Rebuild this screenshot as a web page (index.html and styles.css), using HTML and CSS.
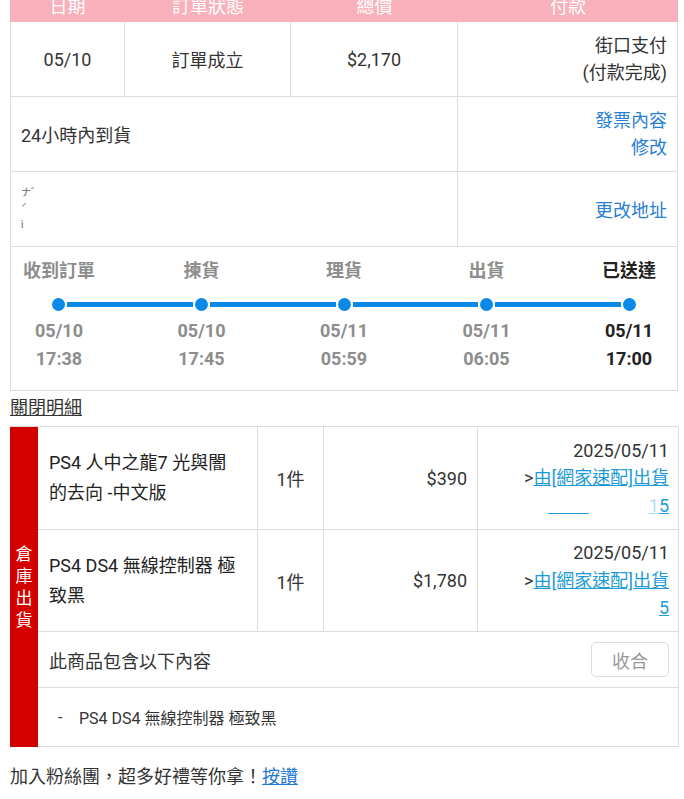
FILE: index.html
```html
<!DOCTYPE html>
<html lang="zh-Hant">
<head>
<meta charset="utf-8">
<title>訂單明細</title>
<link rel="stylesheet" href="styles.css">
</head>
<body>
<div class="page">
  <div class="order">
    <div class="head">
      <div class="hcell">日期</div>
      <div class="hcell">訂單狀態</div>
      <div class="hcell">總價</div>
      <div class="hcell">付款</div>
    </div>
    <div class="row row4">
      <div class="cell center">05/10</div>
      <div class="cell center">訂單成立</div>
      <div class="cell center">$2,170</div>
      <div class="cell right lines">
        <div>街口支付</div>
        <div>(付款完成)</div>
      </div>
    </div>
    <div class="row row2">
      <div class="cell left">24小時內到貨</div>
      <div class="cell right lines">
        <a class="olink">發票內容</a>
        <a class="olink">修改</a>
      </div>
    </div>
    <div class="row row2">
      <div class="cell left redacted">
        <span>ナ゛</span>
        <span>ˊ</span>
        <span>ì</span>
      </div>
      <div class="cell right">
        <a class="olink">更改地址</a>
      </div>
    </div>
    <div class="timeline">
      <div class="tl-grid labels">
        <div>收到訂單</div>
        <div>揀貨</div>
        <div>理貨</div>
        <div>出貨</div>
        <div class="done">已送達</div>
      </div>
      <div class="track">
        <span class="dot"></span><span class="seg"></span>
        <span class="dot"></span><span class="seg"></span>
        <span class="dot"></span><span class="seg"></span>
        <span class="dot"></span><span class="seg"></span>
        <span class="dot"></span>
      </div>
      <div class="tl-grid dates">
        <div>05/10<br>17:38</div>
        <div>05/10<br>17:45</div>
        <div>05/11<br>05:59</div>
        <div>05/11<br>06:05</div>
        <div class="done">05/11<br>17:00</div>
      </div>
    </div>
  </div>

  <a class="toggle">關閉明細</a>

  <div class="items">
    <div class="side">倉庫出貨</div>
    <div class="item-body">
      <div class="prow">
        <div class="pname">PS4 人中之龍7 光與闇<br>的去向 -中文版</div>
        <div class="pqty">1件</div>
        <div class="pprice">$390</div>
        <div class="pship">
          <div>2025/05/11</div>
          <div>&gt;<a class="slink">由[網家速配]出貨</a></div>
          <div class="tail"><span class="ghost">0000</span><span class="gap"></span><a class="slink faint">1</a><a class="slink">5</a></div>
        </div>
      </div>
      <div class="prow">
        <div class="pname">PS4 DS4 無線控制器 極<br>致黑</div>
        <div class="pqty">1件</div>
        <div class="pprice">$1,780</div>
        <div class="pship">
          <div>2025/05/11</div>
          <div>&gt;<a class="slink">由[網家速配]出貨</a></div>
          <div class="tail"><a class="slink">5</a></div>
        </div>
      </div>
      <div class="bundle">
        <span>此商品包含以下內容</span>
        <button class="collapse" type="button">收合</button>
      </div>
      <div class="bundle-list">
        <span class="dash">-</span>
        <span>PS4 DS4 無線控制器 極致黑</span>
      </div>
    </div>
  </div>

  <p class="fans">加入粉絲團，超多好禮等你拿！<a class="like">按讚</a></p>
</div>
</body>
</html>
```
FILE: styles.css
```css
* { box-sizing: border-box; }

body {
  margin: 0;
  background: #fff;
  font-family: Roboto, "Noto Sans CJK TC", sans-serif;
  font-size: 18px;
  color: #333;
}

.page {
  width: 668px;
  margin: -8px 0 0 10px;
}

/* order table */
.head {
  display: grid;
  grid-template-columns: 115px 166px 167px 220px;
  height: 30px;
  background: #f8b0bb;
}
.hcell {
  color: #fff;
  text-align: center;
  line-height: 30px;
}

.row {
  display: grid;
  height: 75px;
  border-left: 1px solid #dcdcdc;
  border-bottom: 1px solid #dcdcdc;
}
.row4 { grid-template-columns: 114px 166px 167px 220px; }
.row2 { grid-template-columns: 447px 220px; }

.cell {
  border-right: 1px solid #dcdcdc;
  display: flex;
  align-items: center;
  padding: 0 10px;
}
.center { justify-content: center; }
.left { justify-content: flex-start; }
.right {
  justify-content: center;
  align-items: flex-end;
  flex-direction: column;
  text-align: right;
}
.lines { line-height: 27px; }

.olink {
  color: #2680d6;
  text-decoration: none;
}

.redacted {
  flex-direction: column;
  align-items: flex-start;
  justify-content: center;
  font-size: 10px;
  line-height: 16px;
  color: #666;
}

/* timeline */
.timeline {
  border: 1px solid #dcdcdc;
  border-top: none;
  padding: 11px 0 17px;
}
.tl-grid {
  display: grid;
  grid-template-columns: repeat(5, 96px);
  justify-content: space-between;
  text-align: center;
  color: #8d8d8d;
  font-weight: bold;
}
.labels { line-height: 26px; }
.dates { line-height: 28px; margin-top: 6px; }
.tl-grid .done { color: #222; }

.track {
  display: flex;
  align-items: center;
  margin: 14px 41px 0 41px;
  height: 13px;
}
.dot {
  width: 13px;
  height: 13px;
  border-radius: 50%;
  background: #0a8ae6;
  flex: none;
}
.seg {
  flex: 1;
  height: 5px;
  margin: 0 2px;
  background: #0a8ae6;
}

/* toggle */
.toggle {
  display: block;
  width: max-content;
  line-height: 26px;
  margin: 4px 0 5px;
  color: #333;
  text-decoration: underline;
}

/* items */
.items {
  display: flex;
  border-top: 1px solid #dcdcdc;
}
.side {
  width: 28px;
  flex: none;
  background: #d40000;
  color: #fff;
  font-size: 17px;
  line-height: 22px;
  display: flex;
  align-items: center;
  justify-content: center;
  padding: 0 5px;
  text-align: center;
}
.item-body {
  flex: 1;
  border-right: 1px solid #dcdcdc;
  border-bottom: 1px solid #dcdcdc;
}
.prow {
  display: grid;
  grid-template-columns: 220px 66px 154px 200px;
  height: 103px;
  border-bottom: 1px solid #dcdcdc;
}
.prow + .prow { height: 102px; }
.prow > div {
  border-right: 1px solid #dcdcdc;
  display: flex;
  align-items: center;
}
.prow > div:last-child { border-right: none; }
.pname {
  padding: 0 10px 0 11px;
  line-height: 30px;
  color: #222;
}
.pqty { justify-content: center; }
.pprice { justify-content: flex-end; padding-right: 10px; }
.pship {
  flex-direction: column;
  justify-content: center;
  align-items: flex-end !important;
  padding-right: 9px;
  line-height: 27.5px;
  text-align: right;
}
.slink {
  color: #1d9bd7;
  text-decoration: underline;
}
.faint { opacity: 0.35; }
.tail { display: flex; align-items: baseline; }
.ghost {
  color: transparent;
  text-decoration: underline;
  text-decoration-color: #1d9bd7;
}
.gap {
  display: inline-block;
  width: 60px;
}

.bundle {
  height: 56px;
  border-bottom: 1px solid #dcdcdc;
  display: flex;
  align-items: center;
  justify-content: space-between;
  padding: 0 9px 0 11px;
  color: #333;
}
.collapse {
  width: 78px;
  height: 35px;
  border: 1px solid #dcdcdc;
  border-radius: 5px;
  background: #fff;
  color: #999;
  font-family: inherit;
  font-size: 18px;
  padding: 0;
}
.bundle-list {
  height: 58px;
  display: flex;
  align-items: center;
  padding-left: 20px;
  font-size: 16px;
  color: #333;
}
.dash { width: 21px; }

.fans {
  margin: 17px 0 0;
  line-height: 26px;
  color: #333;
}
.like {
  color: #1f78d1;
  text-decoration: underline;
}
```
